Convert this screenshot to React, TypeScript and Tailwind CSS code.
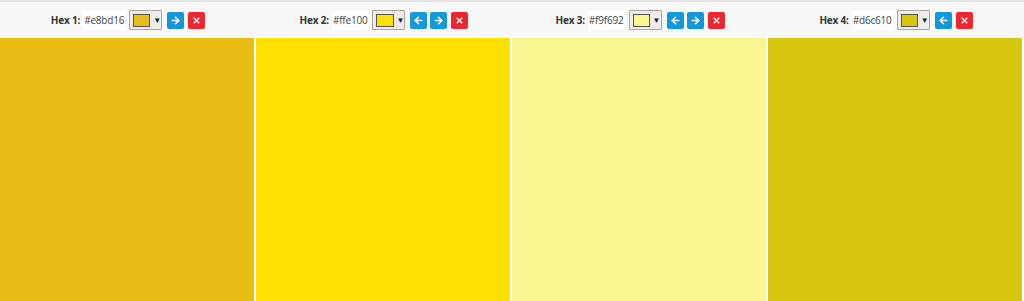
import React from 'react';
import { ArrowLeft, ArrowRight, X } from 'lucide-react';

type Swatch = { hex: string; left: boolean; right: boolean };

const SWATCHES: Swatch[] = [
  { hex: '#e8bd16', left: false, right: true },
  { hex: '#ffe100', left: true, right: true },
  { hex: '#f9f692', left: true, right: true },
  { hex: '#d6c610', left: true, right: false },
];

const bgClass: Record<string, string> = {
  '#e8bd16': 'bg-[#e8bd16]',
  '#ffe100': 'bg-[#ffe100]',
  '#f9f692': 'bg-[#f9f692]',
  '#d6c610': 'bg-[#d6c610]',
};

const SwatchHeader: React.FC<{ s: Swatch; i: number }> = ({ s, i }) => (
  <div className="flex items-center justify-center h-[36px] text-[10px] text-[#333]">
    <span className="font-bold mr-[3px] tracking-[-0.2px]">Hex {i + 1}:</span>
    <span className="bg-white px-[1px] py-[3px] leading-[13px] text-[#444] tracking-[-0.2px]">{s.hex}</span>
    <div className="ml-[4px] flex items-center h-[20px] w-[33px] border border-[#b3a595] bg-[#ececec] pl-[3px] rounded-[1px]">
      <div className={`w-[18px] h-[13px] border border-[#555] ${bgClass[s.hex]}`} />
      <span className="ml-[3px] text-[8px] text-[#222]">▼</span>
    </div>
    {s.left && (
      <button className="ml-[5px] w-[17px] h-[17px] bg-[#1399da] rounded-[2px] flex items-center justify-center text-white">
        <ArrowLeft size={11} strokeWidth={3.5} />
      </button>
    )}
    {s.right && (
      <button className={`${s.left ? 'ml-[3px]' : 'ml-[5px]'} w-[17px] h-[17px] bg-[#1399da] rounded-[2px] flex items-center justify-center text-white`}>
        <ArrowRight size={11} strokeWidth={3.5} />
      </button>
    )}
    <button className="ml-[4px] w-[17px] h-[17px] bg-[#ed2630] rounded-[2px] flex items-center justify-center text-white">
      <X size={9} strokeWidth={4} />
    </button>
  </div>
);

const App: React.FC = () => {
  return (
    <div className="w-[1024px] h-[301px] flex flex-col bg-white overflow-hidden" style={{ fontFamily: '"Open Sans", "Liberation Sans", sans-serif' }}>
      <div className="h-[38px] bg-[#f9f8f9] border-t-[2px] border-[#e6e4e6] grid grid-cols-4">
        {SWATCHES.map((s, i) => (
          <SwatchHeader key={s.hex} s={s} i={i} />
        ))}
      </div>
      <div className="flex-1 grid grid-cols-4 bg-white">
        {SWATCHES.map((s) => (
          <div key={s.hex} className={`border-r-[2px] border-white ${bgClass[s.hex]}`} />
        ))}
      </div>
    </div>
  );
};

export default App;
